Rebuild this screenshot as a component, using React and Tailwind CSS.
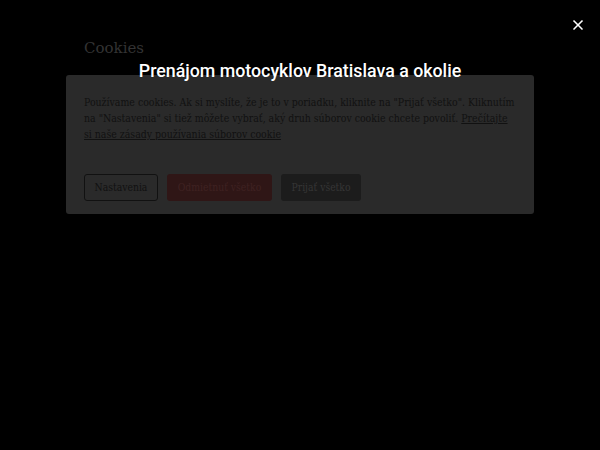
import { X } from "lucide-react";

export default function App() {
  return (
    <div className="relative w-[600px] h-[450px] bg-black overflow-hidden">
      <div className="px-[66px] pt-[37px]">
        <h2 className="pl-[18px] text-[15px] leading-[22px] text-[#333333] font-['DejaVu_Serif',serif]">Cookies</h2>
        <div className="mt-[16px] bg-[#2a2a2a] rounded-[3px] px-[18px] pt-[19px] pb-[13px]">
          <p className="text-[10.45px] leading-[16px] text-[#111111] font-['DejaVu_Serif_Condensed','DejaVu_Serif',serif] [font-stretch:condensed]">
            Používame cookies. Ak si myslíte, že je to v poriadku, kliknite na "Prijať všetko". Kliknutím na "Nastavenia" si tiež môžete vybrať, aký druh súborov cookie chcete povoliť.{" "}
            <span className="underline">Prečítajte si naše zásady používania súborov cookie</span>
          </p>
          <div className="mt-[32px] flex gap-[9px] font-['DejaVu_Serif_Condensed','DejaVu_Serif',serif] [font-stretch:condensed] text-[10.3px]">
            <button className="h-[27px] w-[74px] border border-[#111111] rounded-[3px] text-[#111111]">Nastavenia</button>
            <button className="h-[27px] w-[105px] bg-[#2f1616] rounded-[3px] text-[#3f2222]">Odmietnuť všetko</button>
            <button className="h-[27px] w-[80px] bg-[#1c1c1c] rounded-[3px] text-[#363636]">Prijať všetko</button>
          </div>
        </div>
      </div>
      <div className="absolute top-[60px] left-0 w-full text-center text-white text-[17.8px] leading-[22px] font-medium font-['Roboto',sans-serif]">
        Prenájom motocyklov Bratislava a okolie
      </div>
      <button className="absolute top-[17px] right-[14px] text-white">
        <X size={16} strokeWidth={2.5} />
      </button>
    </div>
  );
}
